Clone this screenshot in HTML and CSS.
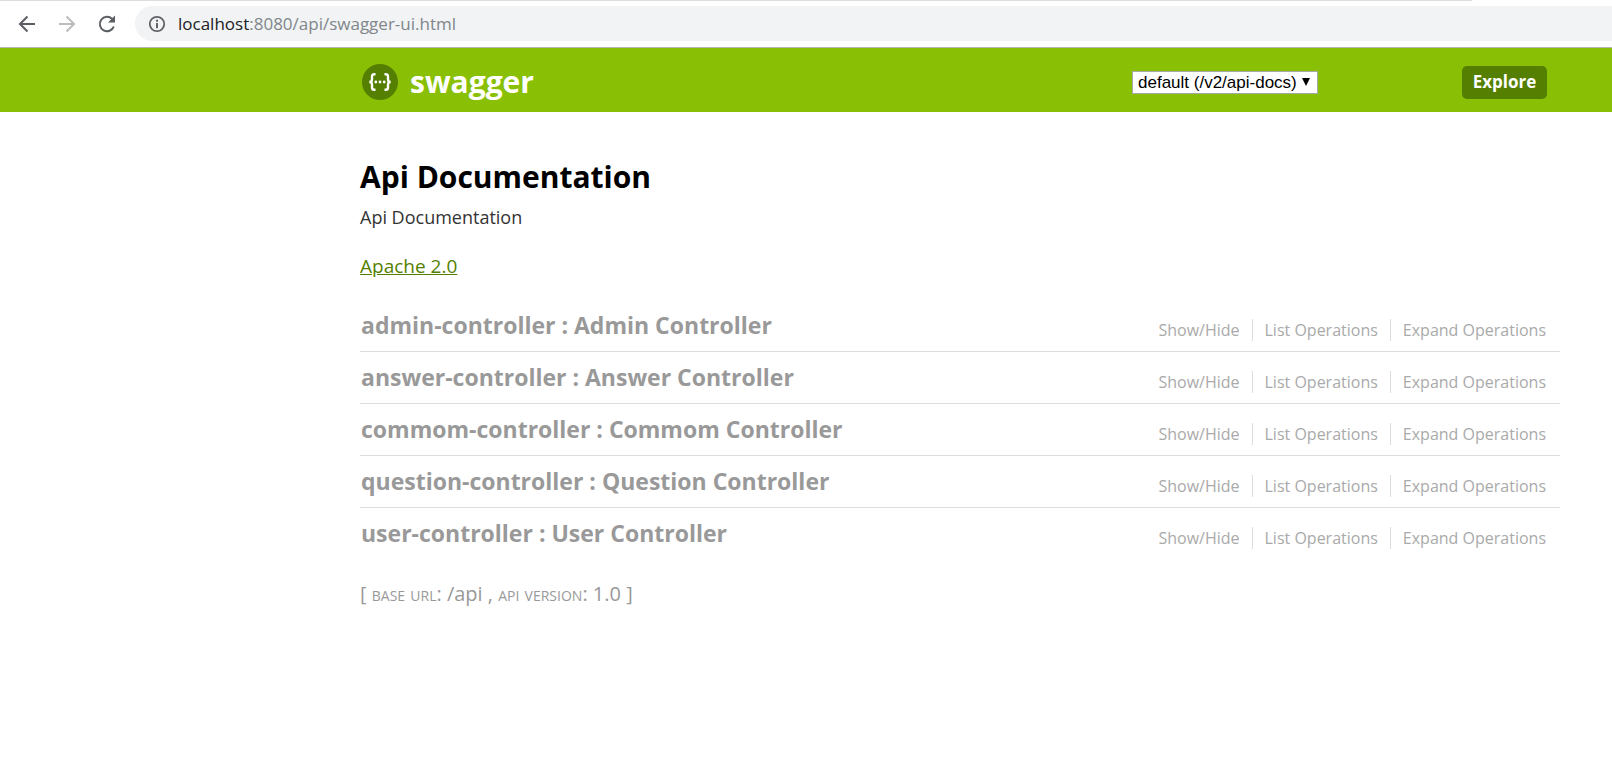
FILE: index.html
```html
<!DOCTYPE html>
<html lang="en">
<head>
<meta charset="utf-8">
<meta name="viewport" content="width=device-width, initial-scale=1">
<title>Swagger UI</title>
<link rel="stylesheet" href="styles.css">
</head>
<body>
<div class="browser-bar">
  <nav class="browser-nav" aria-label="Browser">
    <button class="nav-button" type="button" aria-label="Back">
      <svg width="20" height="20" viewBox="0 0 20 20" fill="none" stroke="currentColor" stroke-width="2"><path d="M18 10H3.500M10.500 2.500L3 10l7.500 7.500"/></svg>
    </button>
    <button class="nav-button nav-button-off" type="button" aria-label="Forward" disabled>
      <svg width="20" height="20" viewBox="0 0 20 20" fill="none" stroke="currentColor" stroke-width="2"><path d="M2 10h14.500M9.500 2.500L17 10l-7.500 7.500"/></svg>
    </button>
    <button class="nav-button" type="button" aria-label="Reload">
      <svg width="20" height="20" viewBox="0 0 20 20" fill="none" stroke="currentColor" stroke-width="2"><path d="M16.800 12.500A7.200 7.200 0 1 1 15.100 4.900L16.500 6.300"/><path d="M18 1.500V8.500H11z" fill="currentColor" stroke="none"/></svg>
    </button>
  </nav>
  <div class="address">
    <svg class="address-icon" width="18" height="18" viewBox="0 0 18 18"><circle cx="9" cy="9" r="7.200" fill="none" stroke="currentColor" stroke-width="1.800"/><path d="M8 4.700h2v2H8zM8 8h2v5.200H8z" fill="currentColor"/></svg>
    <p class="address-text"><span class="address-host">localhost</span>:8080/api/swagger-ui.html</p>
  </div>
</div>
<header class="header">
  <a class="logo" href="#">
    <svg width="36" height="36" viewBox="0 0 36 36"><circle cx="18" cy="18" r="18" fill="#547f00"/><g fill="none" stroke="#fff" stroke-width="2.400"><path d="M13.500 10.200h-1.300q-2.200 0-2.200 2.300v3q0 2.500-2.700 2.500q2.700 0 2.700 2.500v3q0 2.300 2.200 2.300h1.300"/><path d="M22.500 10.200h1.300q2.200 0 2.200 2.300v3q0 2.500 2.700 2.500q-2.700 0-2.700 2.500v3q0 2.300-2.200 2.300h-1.300"/></g><g fill="#fff"><circle cx="13.800" cy="18" r="1.400"/><circle cx="18" cy="18" r="1.400"/><circle cx="22.200" cy="18" r="1.400"/></g></svg>
    <span>swagger</span>
  </a>
  <form class="api-form">
    <div class="picker">
      <select class="picker-select" aria-label="API definition"><option>default (/v2/api-docs)</option></select>
      <svg class="picker-arrow" width="8" height="8" viewBox="0 0 8 8"><path d="M0 0h8L4 8z"/></svg>
    </div>
    <button class="explore" type="button">Explore</button>
  </form>
</header>
<main class="content">
  <h1 class="title">Api Documentation</h1>
  <p class="description">Api Documentation</p>
  <p class="license"><a href="#">Apache 2.0</a></p>
  <ul class="resources">
    <li class="resource">
      <h2 class="resource-name"><a href="#">admin-controller : Admin Controller</a></h2>
      <ul class="options"><li><a href="#">Show/Hide</a></li><li><a href="#">List Operations</a></li><li><a href="#">Expand Operations</a></li></ul>
    </li>
    <li class="resource">
      <h2 class="resource-name"><a href="#">answer-controller : Answer Controller</a></h2>
      <ul class="options"><li><a href="#">Show/Hide</a></li><li><a href="#">List Operations</a></li><li><a href="#">Expand Operations</a></li></ul>
    </li>
    <li class="resource">
      <h2 class="resource-name"><a href="#">commom-controller : Commom Controller</a></h2>
      <ul class="options"><li><a href="#">Show/Hide</a></li><li><a href="#">List Operations</a></li><li><a href="#">Expand Operations</a></li></ul>
    </li>
    <li class="resource">
      <h2 class="resource-name"><a href="#">question-controller : Question Controller</a></h2>
      <ul class="options"><li><a href="#">Show/Hide</a></li><li><a href="#">List Operations</a></li><li><a href="#">Expand Operations</a></li></ul>
    </li>
    <li class="resource">
      <h2 class="resource-name"><a href="#">user-controller : User Controller</a></h2>
      <ul class="options"><li><a href="#">Show/Hide</a></li><li><a href="#">List Operations</a></li><li><a href="#">Expand Operations</a></li></ul>
    </li>
  </ul>
  <footer class="footer">[ <span class="footer-label">base url</span>: /api , <span class="footer-label">api version</span>: 1.0 ]</footer>
</main>
</body>
</html>
```
FILE: styles.css
```css
* {
  box-sizing: border-box;
}

body {
  margin: 0;
  background: #fff;
  font-family: "Open Sans", "Noto Sans", sans-serif;
}

h1, h2, p, ul {
  margin: 0;
  padding: 0;
}

ul {
  list-style: none;
}

.browser-bar {
  display: flex;
  align-items: center;
  gap: 18px;
  height: 48px;
  padding-left: 17px;
  border-bottom: 1px solid #b5b8b0;
  background: linear-gradient(#dcdddd, #dcdddd) no-repeat 0 0 / calc(100% - 140px) 1px;
}

.browser-nav {
  display: flex;
  gap: 20px;
}

.nav-button {
  display: flex;
  padding: 0;
  border: 0;
  background: none;
  color: #5a5d61;
}

.nav-button-off {
  color: #bcbdbf;
}

.address {
  flex: 1;
  display: flex;
  align-items: center;
  gap: 12px;
  height: 35px;
  padding-left: 13px;
  border-radius: 18px 0 0 18px;
  background: #f1f3f4;
  color: #5f6368;
}

.address-text {
  font-size: 17px;
  line-height: 24px;
  color: #80868b;
}

.address-host {
  color: #202124;
}

.header {
  display: flex;
  align-items: center;
  justify-content: space-between;
  height: 64px;
  padding: 4px 65px 0 362px;
  background: #89bf04;
}

.logo {
  display: flex;
  align-items: center;
  gap: 12px;
  font-size: 30px;
  font-weight: 700;
  line-height: 36px;
  color: #fff;
  text-decoration: none;
}

.api-form {
  display: flex;
  align-items: center;
  gap: 144px;
}

.picker {
  position: relative;
}

.picker-select {
  display: block;
  appearance: none;
  width: 186px;
  height: 23px;
  padding: 0 5px;
  border: 1px solid #a9a9a9;
  border-radius: 0;
  background: #fff;
  font: 17px/21px "Liberation Sans", Arial, sans-serif;
  color: #000;
}

.picker-arrow {
  position: absolute;
  top: 7px;
  right: 8px;
  pointer-events: none;
}

.explore {
  width: 85px;
  height: 33px;
  padding: 0;
  border: 0;
  border-radius: 5px;
  background: #547f00;
  font: 700 17px/24px "Open Sans", "Noto Sans", sans-serif;
  color: #fff;
}

.content {
  padding: 44px 52px 44px 360px;
}

.title {
  font-size: 30px;
  line-height: 42px;
  color: #000;
}

.description {
  margin-top: 6px;
  font-size: 18px;
  line-height: 26px;
  color: #333;
}

.license {
  margin-top: 22px;
  font-size: 19px;
  line-height: 28px;
}

.license a {
  color: #547f00;
}

.resources {
  margin-top: 20px;
}

.resource {
  display: flex;
  align-items: center;
  justify-content: space-between;
  height: 52px;
  padding: 0 1px 2px;
  border-bottom: 1px solid #ddd;
}

.resource:last-child {
  border-bottom: 0;
}

.resource-name {
  font-size: 23px;
  line-height: 32px;
}

.resource-name a {
  color: #999;
  text-decoration: none;
}

.options {
  display: flex;
  padding: 10px 1px 0 0;
}

.options li {
  padding: 0 12px;
  border-left: 1px solid #ddd;
  font-size: 16px;
  line-height: 22px;
}

.options li:first-child {
  border-left: 0;
}

.options a {
  color: #aaa;
  text-decoration: none;
}

.footer {
  margin-top: 20px;
  font-size: 20px;
  line-height: 28px;
  color: #999;
}

.footer-label {
  font-variant: small-caps;
}
```
